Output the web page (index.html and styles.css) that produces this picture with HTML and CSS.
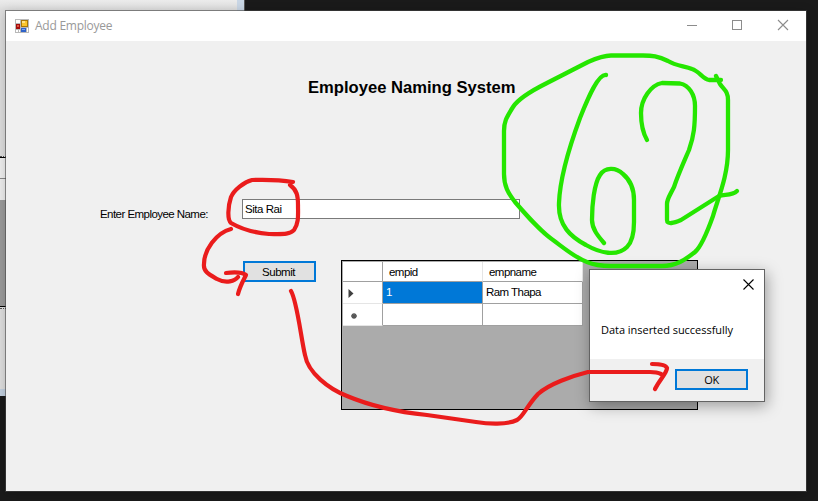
FILE: index.html
```html
<!DOCTYPE html>
<html lang="en">
<head>
<meta charset="utf-8">
<title>Add Employee</title>
<link rel="stylesheet" href="styles.css">
</head>
<body>
<div class="desktop">
  <div class="back-window">
    <div class="back-top"></div>
    <div class="back-head"></div>
    <div class="back-row"></div>
    <div class="back-grid"></div>
    <div class="back-bottom"></div>
  </div>
  <main class="window">
    <header class="titlebar">
      <svg class="app-icon" width="14" height="14" viewBox="0 0 14 14" shape-rendering="crispEdges">
        <rect width="14" height="14" fill="#b9b9b9"/>
        <path d="M1 1h4v3H1zM1 11h2v2H1zM4 11h1v2H4zM12 9h1v4h-1z" fill="#fff"/>
        <rect x="1" y="5" width="4" height="5" fill="#a30d0d"/>
        <rect x="2" y="6" width="2" height="2" fill="#e4513f"/>
        <rect x="6" y="1" width="7" height="7" fill="#a87808"/>
        <rect x="7" y="2" width="5" height="5" fill="#fbc52b"/>
        <rect x="7" y="2" width="3" height="2" fill="#ffe385"/>
        <rect x="6" y="9" width="5" height="4" fill="#2e62c9"/>
        <rect x="7" y="10" width="3" height="1" fill="#7ba6f5"/>
      </svg>
      <span class="caption">Add Employee</span>
      <svg class="controls" width="102" height="12" viewBox="0 0 102 12" fill="none" stroke="#8c8c8c">
        <path d="M0 6.500h10M45.500 1.500h9v9h-9z" shape-rendering="crispEdges"/>
        <path d="M91 1l10 10M101 1L91 11" stroke-width="1.100"/>
      </svg>
    </header>
    <section class="client">
      <h1>Employee Naming System</h1>
      <div class="field">
        <label for="name">Enter Employee Name:</label>
        <input id="name" type="text" value="Sita Rai">
      </div>
      <div class="results">
        <button class="button">Submit</button>
        <div class="data-view">
          <div class="data-grid">
            <div class="cell row-head"></div>
            <div class="cell head">empid</div>
            <div class="cell head">empname</div>
            <div class="cell row-head"><svg width="6" height="9" viewBox="0 0 6 9"><path d="M.5 0L5.500 4.500.5 9z" fill="#404040"/></svg></div>
            <div class="cell selected">1</div>
            <div class="cell">Ram Thapa</div>
            <div class="cell row-head new"><svg width="6" height="6" viewBox="0 0 6 6"><path d="M3 0v6M0 3h6M1 1l4 4M5 1L1 5" stroke="#555" stroke-width="1.300"/></svg></div>
            <div class="cell"></div>
            <div class="cell"></div>
          </div>
        </div>
      </div>
    </section>
  </main>
  <section class="dialog">
    <div class="dialog-body">
      <svg class="close" width="11" height="11" viewBox="0 0 11 11"><path d="M.5.5l10 10M10.500.5l-10 10" stroke="#000" stroke-width="1.100"/></svg>
      <p>Data inserted successfully</p>
    </div>
    <footer><button class="button">OK</button></footer>
  </section>
  <svg class="ink" width="818" height="501" viewBox="0 0 818 501">
    <g class="green">
      <path d="M721 80H709C703 79 699 71 692 69C685 66 676 66 668 61C658 56 652 55.500 643 55.500H611C603 55.500 597 58 588 62L547 83C529 92 518 99 513 107C506 118 504 122 504 131V174C504 186 508 193 515 202C528 217 541 232 553 240C564 248 574 257 587 262C594 265 601 266 611 266H662C676 266 685 260 695 252C702 246 708 230 713 216C718 198 728 176 728 150V100C728 91 724 90 720 84L716 76"/>
      <path d="M606 75C598 74 588 98 580 118C570 145 560 176 559 203C558 226 571 237 586 245C600 253 617 257 627 247C633 241 634 231 634 222V200C634 186 629 179 623 174C616 167 605 167 600 175C594 184 592 205 592 220C592 229 598 236 604 243"/>
      <path d="M647 140C643 133 641 125 641 113C641 99 651 85 662 83L680 83.500C689 85 695 95 695 106C695 126 694 136 689 150C683 164 678 175 674 187C669 197 667 199 667 204V220C667 225 674 223 681 220L719 196C724 194 732 196 737 191"/>
    </g>
    <g class="red">
      <path d="M293 182C281 180 267 179.500 252 180C244 182 234 190 231 197C228 206 227 220 231 223C243 230 257 233 269 234C281 234 290 235 294 230C299 223 298 215 298 205C298 196 297 190 290 185"/>
      <path d="M231 229C216 233 204 250 204 264C203 272 210 275 217 279C226 284 235 281 238 277"/>
      <path d="M226 273C234 272 242 272 246 275C243 281 240 286 238 294"/>
      <path d="M291 291C297 301 301 338 305 355C308 373 329 389 347 396C373 407 398 412 427 415L476 422C488 424 507 425 517 420C523 417 526 407 538 394C549 384 572 376 588 372H650C655 372 659 373 661 374"/>
      <path d="M652 364C659 364 666 365 667 368C667 373 660 379 655 389"/>
    </g>
  </svg>
</div>
</body>
</html>
```
FILE: styles.css
```css
* { box-sizing: border-box; }

body { margin: 0; }

.desktop {
  position: relative;
  width: 818px;
  height: 501px;
  overflow: hidden;
  background: #1a1a1a;
  font-family: "Liberation Sans", Arial, sans-serif;
  font-size: 11.5px;
  letter-spacing: -0.55px;
  color: #000;
}

.back-window {
  position: absolute;
  left: 0;
  top: 0;
  width: 245px;
  height: 396px;
  border-right: 1px solid #555;
  border-bottom: 1px solid #555;
  background: #e2e2e2;
}

.back-top {
  height: 157px;
  border-right: 7px solid #c9d6e5;
  border-bottom: 1px dotted #555;
  background: linear-gradient(#ebebeb, #dedede 10px);
}

.back-head { height: 22px; border-top: 1px solid #000; border-bottom: 1px solid #888; background: #f0f0f0; }
.back-row { height: 21px; background: #efefef; }
.back-grid { height: 107px; border-bottom: 1px solid #000; background: #9b9b9b; }
.back-bottom { height: 88px; margin-top: 1px; border-top: 1px dotted #555; border-bottom: 7px solid #c3d1e0; background: #dfdfdf; }

.window {
  position: absolute;
  left: 5px;
  top: 10px;
  width: 802px;
  height: 482px;
  border: 1px solid rgba(70, 70, 70, 0.6);
  background: #f0f0f0;
  background-clip: padding-box;
  box-shadow: 0 2px 10px rgba(0, 0, 0, 0.2);
}

.titlebar {
  display: flex;
  align-items: center;
  height: 30px;
  padding: 0 17px 0 9px;
  background: #fff;
}

.caption {
  margin-left: 6px;
  font: 12px/30px "Open Sans", sans-serif;
  letter-spacing: -0.25px;
  color: #999;
}

.controls { margin: -2px 0 0 auto; }

.client { padding-top: 36px; }

h1 {
  margin: 0 0 0 302px;
  font-size: 16.6px;
  line-height: 22px;
  letter-spacing: 0;
}

.field {
  display: flex;
  align-items: flex-start;
  margin: 100px 0 0 94px;
}

label { width: 142px; padding-top: 8px; line-height: 14px; }

input {
  width: 278px;
  height: 20px;
  padding: 0 2px;
  border: 1px solid #7a7a7a;
  background: #fff;
  font: inherit;
  letter-spacing: -0.45px;
}

.results {
  display: flex;
  align-items: flex-start;
  gap: 25px;
  margin: 39px 0 0 237px;
}

.button {
  width: 73px;
  height: 21px;
  padding: 0;
  border: 2px solid #0078d7;
  background: #e1e1e1;
  font: inherit;
  letter-spacing: -0.3px;
  color: #000;
}

.results .button { margin-top: 1px; padding-right: 2px; letter-spacing: -0.5px; }

.data-view {
  width: 357px;
  height: 150px;
  padding: 1px;
  border: 1px solid #000;
  background: #ababab;
}

.data-grid {
  display: grid;
  grid-template-columns: 40px 100px 100px;
  grid-template-rows: 20px 22px 22px;
  width: 240px;
}

.cell {
  padding-left: 3px;
  border-right: 1px solid #a0a0a0;
  border-bottom: 1px solid #a0a0a0;
  background: #fff;
  line-height: 21px;
}

.head { padding-left: 6px; border-right-color: #e5e5e5; line-height: 20px; }
.row-head { display: flex; align-items: center; padding: 2px 0 0 5px; border-bottom-color: #e5e5e5; }
.row-head:first-child { border-bottom-color: #a0a0a0; }
.row-head.new { padding-left: 8px; }
.selected { background: #0078d7; color: #fff; }

.dialog {
  position: absolute;
  left: 589px;
  top: 269px;
  width: 176px;
  height: 133px;
  border: 1px solid #636363;
  background: #f0f0f0;
  box-shadow: 2px 4px 14px rgba(0, 0, 0, 0.35);
  font-family: "Open Sans", sans-serif;
  font-size: 11px;
  letter-spacing: -0.03px;
}

.dialog-body { height: 89px; padding: 9px 10px 0 11px; background: #fff; }
.close { display: block; margin-left: auto; }
.dialog p { margin: 32px 0 0; line-height: 16px; white-space: nowrap; }
.dialog footer { display: flex; justify-content: flex-end; padding: 10px 16px 0 0; }

.ink {
  position: absolute;
  left: 0;
  top: 0;
  fill: none;
  stroke-width: 4;
  stroke-linecap: round;
  stroke-linejoin: round;
  pointer-events: none;
}

.green { stroke: #25e600; stroke-width: 4.3; }
.red { stroke: #ea1c1c; stroke-width: 4.2; }
```
